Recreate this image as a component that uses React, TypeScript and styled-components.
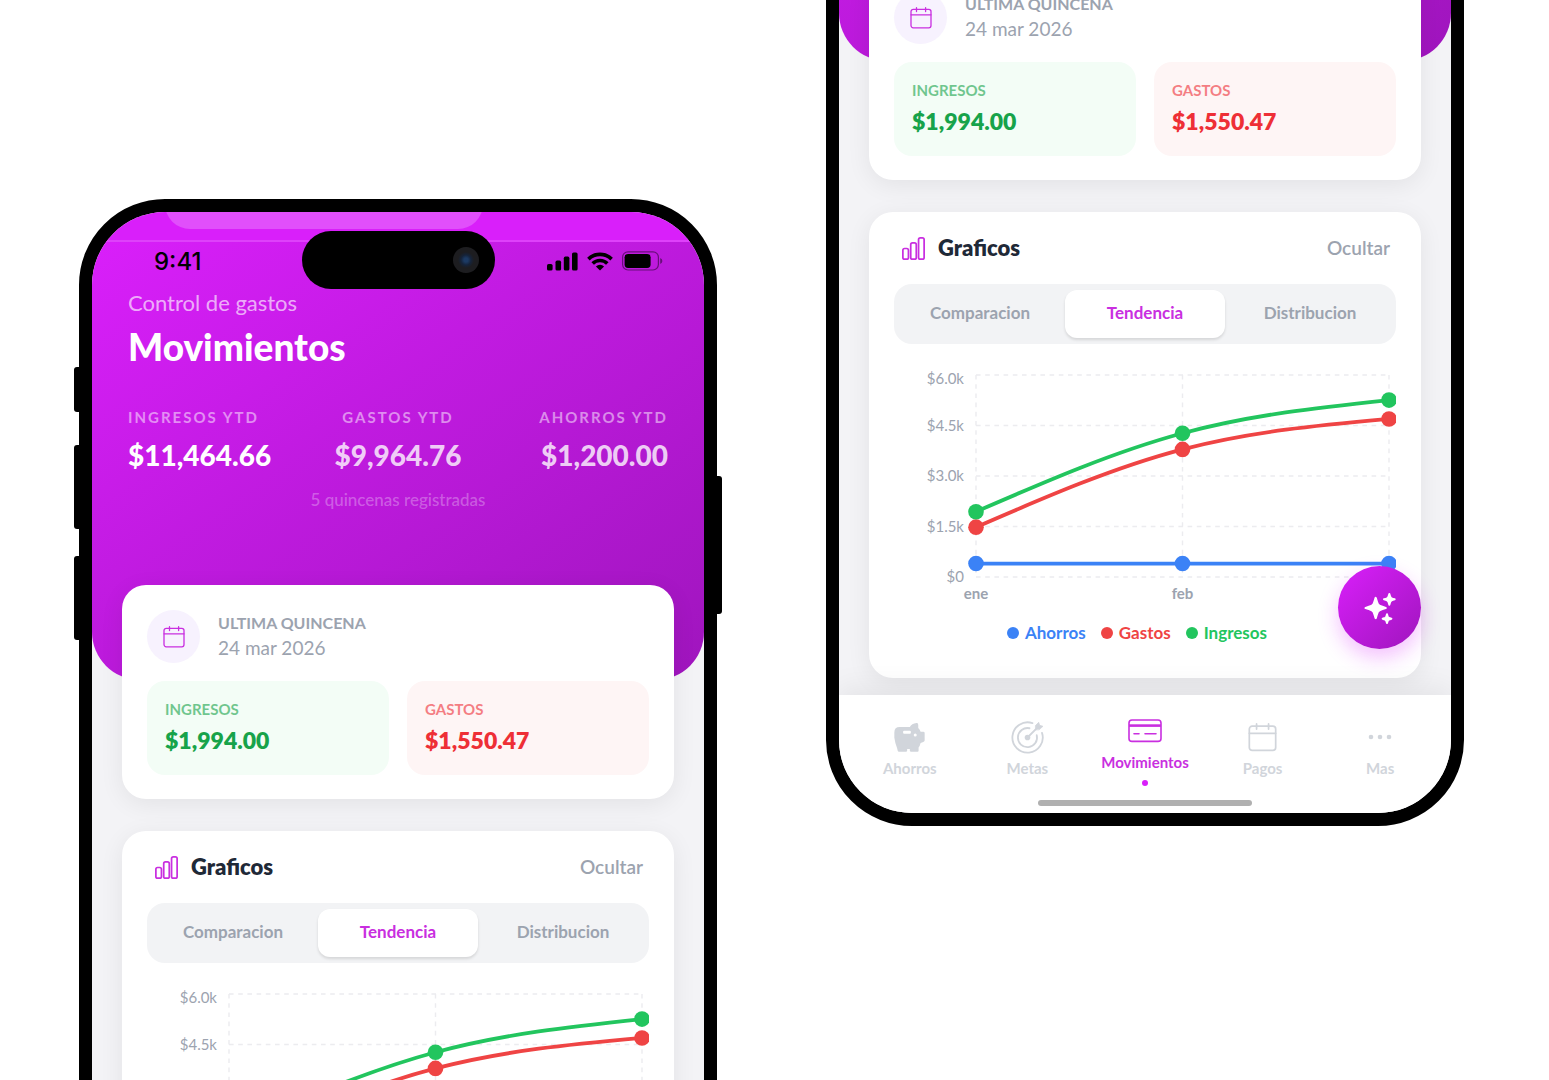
import React from "react";
import styled, { createGlobalStyle, css } from "styled-components";

const color = {
  brand: "#c92fe0",
  brandBright: "#d91ffa",
  brandDeep: "#9f15bd",
  ink: "#1f2937",
  muted: "#9ca3af",
  faint: "#d1d5db",
  page: "#f3f3f6",
  green: "#22c55e",
  red: "#ef4444",
  blue: "#3b82f6",
};

const GlobalStyle = createGlobalStyle`
  *, *::before, *::after { box-sizing: border-box; }
  body {
    margin: 0;
    background: #ffffff;
    font-family: Lato, "Open Sans", sans-serif;
  }
  button { font: inherit; border: 0; margin: 0; padding: 0; background: none; cursor: pointer; }
  h1, h2, p, dl, dd, dt { margin: 0; }
`;

/* ---------- stage and device ---------- */

const Stage = styled.main`
  display: grid;
  grid-template-columns: 1fr 1fr;
  grid-template-rows: minmax(0, 1fr);
  column-gap: 109px;
  height: 100vh;
  padding: 0 85px 0 79px;
  overflow: hidden;
`;

const Device = styled.section<{ $anchor: "top" | "bottom" }>`
  position: relative;
  min-width: 0;
  height: 1246px;
  border: 13px solid #000;
  border-radius: 86px;
  background: #000;
  ${(p) =>
    p.$anchor === "top"
      ? css`
          align-self: start;
          margin-top: 199px;
        `
      : css`
          align-self: end;
          margin-bottom: 254px;
        `}
`;

const SideKey = styled.span<{ $side: "left" | "right"; $top: number; $length: number }>`
  position: absolute;
  ${(p) => p.$side}: -18px;
  top: ${(p) => p.$top}px;
  width: 8px;
  height: ${(p) => p.$length}px;
  border-radius: 3px;
  background: #000;
`;

const Screen = styled.div`
  position: relative;
  display: flex;
  flex-direction: column;
  height: 100%;
  border-radius: 73px;
  background: ${color.page};
  overflow: hidden;
`;

const Island = styled.div`
  position: absolute;
  top: 19px;
  left: 50%;
  display: flex;
  align-items: center;
  justify-content: flex-end;
  width: 193px;
  height: 58px;
  margin-left: -96px;
  padding-right: 16px;
  border-radius: 29px;
  background: #000;
`;

const Camera = styled.div`
  width: 26px;
  height: 26px;
  border-radius: 50%;
  background: radial-gradient(circle, #1c3a63 0 2px, #15233a 5px, #1d1d20 8px);
`;

const StatusBar = styled.div`
  position: absolute;
  top: 34px;
  left: 0;
  right: 0;
  display: flex;
  align-items: center;
  justify-content: space-between;
  height: 30px;
  padding: 0 41px 0 62px;
`;

const Clock = styled.time`
  padding-top: 2px;
  font: 500 24px/28px Inter, sans-serif;
  color: #000;
`;

const StatusIcons = styled.div`
  display: flex;
  align-items: center;
  gap: 9px;
`;

const HomeIndicator = styled.div`
  position: absolute;
  bottom: 7px;
  left: 50%;
  width: 214px;
  height: 6px;
  margin-left: -107px;
  border-radius: 3px;
  background: #b0b0b0;
`;

/* ---------- scrolling content ---------- */

const Content = styled.div`
  flex: 1;
  min-height: 0;
  overflow: hidden;
`;

const Overscroll = styled.div`
  height: 30px;
  border-bottom: 2px solid #de41fa;
  background: ${color.brandBright};
  overflow: hidden;
`;

const OverscrollPill = styled.div`
  width: 52%;
  height: 50px;
  margin: -33px 0 0 73px;
  border-radius: 30px;
  background: #e14ffb;
`;

const Hero = styled.header`
  padding: 47px 36px 168px;
  border-radius: 0 0 48px 48px;
  background: linear-gradient(145deg, ${color.brandBright}, ${color.brandDeep});
  color: #fff;
`;

const Eyebrow = styled.p`
  font-size: 22px;
  line-height: 28px;
  color: rgba(255, 255, 255, 0.65);
`;

const Title = styled.h1`
  margin-top: 8px;
  font-size: 37px;
  font-weight: 900;
  line-height: 44px;
`;

const Totals = styled.dl`
  display: grid;
  grid-template-columns: repeat(3, 1fr);
  margin-top: 38px;
`;

const Total = styled.div<{ $align: "left" | "center" | "right" }>`
  text-align: ${(p) => p.$align};
`;

const TotalLabel = styled.dt`
  font-size: 15px;
  font-weight: 700;
  line-height: 20px;
  letter-spacing: 2px;
  color: rgba(255, 255, 255, 0.5);
`;

const TotalValue = styled.dd<{ $strong: boolean }>`
  margin-top: 10px;
  font-size: 28px;
  font-weight: 900;
  line-height: 36px;
  color: ${(p) => (p.$strong ? "#fff" : "rgba(255, 255, 255, 0.8)")};
`;

const HeroNote = styled.p`
  margin-top: 15px;
  font-size: 17px;
  font-weight: 500;
  line-height: 24px;
  text-align: center;
  color: rgba(255, 255, 255, 0.3);
`;

const Cards = styled.div`
  display: flex;
  flex-direction: column;
  gap: 32px;
  margin-top: -95px;
  padding: 0 30px;
`;

const Card = styled.section`
  position: relative;
  padding: 24px 25px;
  border-radius: 24px;
  background: #fff;
  box-shadow: 0 5px 24px rgba(0, 0, 0, 0.07);
`;

const PeriodRow = styled.div`
  display: flex;
  align-items: center;
  gap: 18px;
  padding-top: 1px;
`;

const PeriodIcon = styled.div`
  display: flex;
  align-items: center;
  justify-content: center;
  width: 53px;
  height: 53px;
  border-radius: 50%;
  background: #f7f2fe;
  color: ${color.brand};
`;

const PeriodCopy = styled.div`
  padding-bottom: 3px;
`;

const PeriodText = styled.p<{ $label?: boolean }>`
  font-size: ${(p) => (p.$label ? 16 : 19)}px;
  font-weight: ${(p) => (p.$label ? 700 : 400)};
  line-height: 25px;
  color: ${color.muted};
`;

const Tiles = styled.dl`
  display: grid;
  grid-template-columns: 1fr 1fr;
  gap: 18px;
  margin-top: 18px;
`;

const Tile = styled.div<{ $tone: "green" | "red" }>`
  padding: 18px 18px 20px;
  border-radius: 18px;
  background: ${(p) => (p.$tone === "green" ? "#f3fdf6" : "#fef5f5")};
  color: ${(p) => (p.$tone === "green" ? "#17a34a" : "#ee2f36")};
`;

const TileLabel = styled.dt`
  font-size: 15px;
  font-weight: 700;
  line-height: 20px;
  opacity: 0.6;
`;

const TileValue = styled.dd`
  margin-top: 6px;
  font-size: 23px;
  font-weight: 800;
  line-height: 30px;
`;

const ChartHead = styled.div`
  display: flex;
  align-items: center;
  gap: 13px;
  height: 24px;
  padding: 0 6px 0 8px;
`;

const ChartTitle = styled.h2`
  flex: 1;
  font-size: 22px;
  font-weight: 800;
  line-height: 24px;
  color: ${color.ink};
`;

const HideButton = styled.button`
  font-size: 19px;
  font-weight: 600;
  line-height: 24px;
  color: ${color.muted};
`;

const Tabs = styled.div`
  display: grid;
  grid-template-columns: repeat(3, 1fr);
  gap: 5px;
  margin-top: 24px;
  padding: 6px;
  border-radius: 18px;
  background: #f2f3f5;
`;

const Tab = styled.button<{ $active: boolean }>`
  height: 48px;
  padding-bottom: 3px;
  border-radius: 12px;
  font-size: 17px;
  font-weight: 700;
  color: ${color.muted};
  ${(p) =>
    p.$active &&
    css`
      background: #fff;
      color: ${color.brand};
      box-shadow: 0 2px 3px rgba(0, 0, 0, 0.12);
    `}
`;

const Chart = styled.svg`
  display: block;
  width: 100%;
  margin-top: 16px;
  font-family: inherit;
`;

const AxisText = styled.text<{ $bold?: boolean }>`
  font-size: 15px;
  font-weight: ${(p) => (p.$bold ? 700 : 400)};
  fill: ${color.muted};
`;

const Legend = styled.ul`
  display: flex;
  justify-content: center;
  gap: 15px;
  margin: 17px 0 0;
  padding: 0 16px 8px 0;
  list-style: none;
`;

const LegendItem = styled.li<{ $color: string }>`
  display: flex;
  align-items: center;
  gap: 6px;
  font-size: 17px;
  font-weight: 700;
  line-height: 26px;
  color: ${(p) => p.$color};

  &::before {
    content: "";
    width: 12px;
    height: 12px;
    border-radius: 50%;
    background: currentColor;
  }
`;

/* ---------- floating action and tab bar ---------- */

const AssistantButton = styled.button`
  position: absolute;
  right: 30px;
  bottom: 164px;
  display: flex;
  align-items: center;
  justify-content: center;
  width: 83px;
  height: 83px;
  border-radius: 50%;
  background: linear-gradient(135deg, ${color.brandBright}, ${color.brandDeep});
  box-shadow: 0 9px 20px rgba(217, 31, 250, 0.28);
  color: #fff;
`;

const NavBar = styled.nav`
  position: relative;
  display: grid;
  grid-template-columns: repeat(5, 1fr);
  height: 118px;
  padding: 21px 12px 0;
  background: #fff;
  box-shadow: 0 -6px 28px rgba(0, 0, 0, 0.07);
`;

const NavItem = styled.a<{ $active: boolean }>`
  display: flex;
  flex-direction: column;
  align-items: center;
  gap: 6px;
  font-size: 15px;
  font-weight: 700;
  line-height: 20px;
  text-decoration: none;
  color: ${(p) => (p.$active ? color.brand : color.faint)};
  padding-top: ${(p) => (p.$active ? 0 : 6)}px;
`;

const NavGlyph = styled.span`
  display: flex;
  align-items: center;
  justify-content: center;
  height: 30px;
`;

const NavDot = styled.span`
  width: 6px;
  height: 6px;
  margin-top: 2px;
  border-radius: 50%;
  background: ${color.brandBright};
`;

/* ---------- icons ---------- */

const CalendarIcon = ({ size }: { size: number }) => (
  <svg width={size} height={size} viewBox="0 0 22 22" fill="none" stroke="currentColor" strokeWidth="1.3" strokeLinecap="round">
    <rect x="1" y="2.4" width="20" height="18.4" rx="2.2" />
    <path d="M1 7.8H21M6.5 .7V4.6M15.6 .7V4.6" />
  </svg>
);

const BarsIcon = () => (
  <svg width="23" height="23" viewBox="0 0 66 66" fill="none" stroke={color.brand} strokeWidth="5">
    <rect x="2.5" y="33" width="16" height="30.5" rx="5" />
    <rect x="25" y="17" width="16" height="46.5" rx="5" />
    <rect x="47.5" y="2.5" width="16" height="61" rx="5" />
  </svg>
);

const PiggyIcon = () => (
  <svg width="33" height="33" viewBox="0 0 98 98" fill="currentColor">
    <path
      fillRule="evenodd"
      d="M4 34Q4 18 20 18H50Q55 8 70 6Q75 5 75 12V21Q80 26 82 32H90Q94 32 94 36V58Q94 61 90 62L82 65Q80 73 76 79V88Q76 91 73 91H54Q50 91 50 88V83H42V88Q42 91 38 91H18Q14 91 14 88L12 80Q6 65 4 50ZM33 29Q30 29 30 32V35Q30 38 33 38H50Q53 38 53 35V32Q53 29 50 29ZM66 37A4.5 4.5 0 1 0 66 46A4.5 4.5 0 1 0 66 37Z"
    />
  </svg>
);

const TargetIcon = () => (
  <svg width="33" height="33" viewBox="0 0 100 100" fill="none" stroke="currentColor" strokeWidth="5.5" strokeLinecap="round">
    <path d="M65 6.5A46 46 0 1 0 94 36" />
    <path d="M56 22A29 29 0 1 0 78 43" />
    <path d="M50 50L80 20" />
    <circle cx="50" cy="50" r="8.5" fill="currentColor" stroke="none" />
    <path d="M74 26V14L84 4L87 13L97 16L86 26Z" fill="currentColor" stroke="currentColor" strokeWidth="2" strokeLinejoin="round" />
  </svg>
);

const CreditCardIcon = () => (
  <svg width="34" height="24" viewBox="0 0 34 24" fill="none" stroke="currentColor" strokeWidth="1.6" strokeLinecap="round">
    <rect x="1" y="1" width="32" height="21.4" rx="3" />
    <path d="M1 6.6H33" strokeWidth="2.6" strokeLinecap="butt" />
    <path d="M6 14.8H11M17 14.8H28" />
  </svg>
);

const DotsIcon = () => (
  <svg width="24" height="6" viewBox="0 0 24 6" fill="currentColor">
    <circle cx="3" cy="3" r="2.3" />
    <circle cx="12" cy="3" r="2.3" />
    <circle cx="21" cy="3" r="2.3" />
  </svg>
);

const star = (cx: number, cy: number, r: number) => {
  const a = r * 0.22;
  const b = r * 0.3;
  return `M${cx} ${cy - r}Q${cx + a} ${cy - a} ${cx + b} ${cy - b}Q${cx + a} ${cy - a} ${cx + r} ${cy}Q${cx + a} ${cy + a} ${cx + b} ${cy + b}Q${cx + a} ${cy + a} ${cx} ${cy + r}Q${cx - a} ${cy + a} ${cx - b} ${cy + b}Q${cx - a} ${cy + a} ${cx - r} ${cy}Q${cx - a} ${cy - a} ${cx - b} ${cy - b}Q${cx - a} ${cy - a} ${cx} ${cy - r}Z`;
};

const SparklesIcon = () => (
  <svg width="32" height="32" viewBox="0 0 96 96" fill="currentColor" stroke="currentColor" strokeWidth="7" strokeLinejoin="round">
    <path d={star(35, 48, 30)} />
    <path d={star(76, 22, 16)} strokeWidth="6" />
    <path d={star(69, 80, 13)} strokeWidth="6" />
  </svg>
);

const SignalIcon = () => (
  <svg width="31" height="19" viewBox="0 0 31 19">
    <rect x="0" y="12" width="5.6" height="6.5" rx="1.6" />
    <rect x="8.5" y="8.6" width="5.6" height="9.9" rx="1.6" />
    <rect x="16.8" y="4.6" width="5.6" height="13.9" rx="1.6" />
    <rect x="25" y="0.4" width="5.6" height="18.1" rx="1.6" />
  </svg>
);

const WifiIcon = () => (
  <svg width="26" height="19" viewBox="0 0 26 19" fill="none" stroke="#000" strokeWidth="3.6">
    <path d="M1.4 7.1A16.6 16.6 0 0 1 24.6 7.1" />
    <path d="M5.7 11.5A10.4 10.4 0 0 1 20.3 11.5" />
    <path d="M13 18.6L8.9 14.4A6 6 0 0 1 17.1 14.4Z" fill="#000" stroke="none" />
  </svg>
);

const BatteryIcon = () => (
  <svg width="41" height="20" viewBox="0 0 41 20">
    <rect x="0.6" y="0.8" width="35.8" height="18.2" rx="5.4" fill="none" stroke="#000" strokeOpacity="0.45" strokeWidth="1.2" />
    <rect x="2.6" y="2.9" width="26" height="14" rx="3.4" />
    <path d="M38.2 7V13Q40.4 12 40.4 10T38.2 7Z" fillOpacity="0.45" />
  </svg>
);

/* ---------- chart ---------- */

const plot = { left: 82, right: 495, top: 15, bottom: 217, max: 6000 };
const months = ["ene", "feb", "mar"];
const series = [
  { name: "Ahorros", color: color.blue, values: [400, 400, 400] },
  { name: "Gastos", color: color.red, values: [1480, 3790, 4694.76] },
  { name: "Ingresos", color: color.green, values: [1940, 4270, 5254.66] },
];
const ticks = [
  { value: 6000, label: "$6.0k" },
  { value: 4500, label: "$4.5k" },
  { value: 3000, label: "$3.0k" },
  { value: 1500, label: "$1.5k" },
  { value: 0, label: "$0" },
];

const px = (i: number) => plot.left + (i * (plot.right - plot.left)) / (months.length - 1);
const py = (v: number) => plot.bottom - (v / plot.max) * (plot.bottom - plot.top);

/* Smooth three-point curve whose slope at the middle is the mean of both sides. */
const curve = (values: number[]) => {
  const [a, b, c] = values.map(py);
  const first = b - a;
  const second = c - b;
  const mid = (first + second) / 2;
  const start = (3 * first - mid) / 2;
  const end = (3 * second - mid) / 2;
  const third = (px(1) - px(0)) / 3;
  return [
    `M${px(0)} ${a}`,
    `C${px(0) + third} ${a + start / 3} ${px(1) - third} ${b - mid / 3} ${px(1)} ${b}`,
    `C${px(1) + third} ${b + mid / 3} ${px(2) - third} ${c - end / 3} ${px(2)} ${c}`,
  ].join("");
};

const TrendChart = () => (
  <Chart viewBox="0 0 502 243" role="img" aria-label="Tendencia">
    <g stroke="#ececef" strokeWidth="1.4" strokeDasharray="4.6 4.6">
      {ticks.map((t) => (
        <path key={t.value} d={`M${plot.left} ${py(t.value)}H${plot.right}`} />
      ))}
      {months.map((m, i) => (
        <path key={m} d={`M${px(i)} ${plot.top}V${plot.bottom}`} />
      ))}
    </g>
    {ticks.map((t, i) => (
      <AxisText key={t.value} x="70" y={py(t.value) + (i === 0 ? 9 : 5)} textAnchor="end">
        {t.label}
      </AxisText>
    ))}
    {months.map((m, i) => (
      <AxisText key={m} $bold x={px(i)} y="239" textAnchor="middle">
        {m}
      </AxisText>
    ))}
    {series.map((s) => (
      <g key={s.name} fill={s.color}>
        <path d={curve(s.values)} fill="none" stroke={s.color} strokeWidth="3.8" />
        {s.values.map((v, i) => (
          <circle key={i} cx={px(i)} cy={py(v)} r="7.8" />
        ))}
      </g>
    ))}
  </Chart>
);

/* ---------- app ---------- */

const totals = [
  { label: "INGRESOS YTD", value: "$11,464.66", align: "left" as const },
  { label: "GASTOS YTD", value: "$9,964.76", align: "center" as const },
  { label: "AHORROS YTD", value: "$1,200.00", align: "right" as const },
];

const tabs = ["Comparacion", "Tendencia", "Distribucion"];

const navItems = [
  { label: "Ahorros", icon: <PiggyIcon /> },
  { label: "Metas", icon: <TargetIcon /> },
  { label: "Movimientos", icon: <CreditCardIcon />, active: true },
  { label: "Pagos", icon: <CalendarIcon size={29} /> },
  { label: "Mas", icon: <DotsIcon /> },
];

/* The top-anchored phone shows the status area and keys, the bottom-anchored one the tab bar. */
const Phone = ({ anchor }: { anchor: "top" | "bottom" }) => (
  <Device $anchor={anchor}>
    {anchor === "top" && (
      <>
        <SideKey $side="left" $top={155} $length={45} />
        <SideKey $side="left" $top={233} $length={84} />
        <SideKey $side="left" $top={344} $length={84} />
        <SideKey $side="right" $top={264} $length={138} />
      </>
    )}
    <Screen>
      <Content>
        <Overscroll>
          <OverscrollPill />
        </Overscroll>
        <Hero>
          <Eyebrow>Control de gastos</Eyebrow>
          <Title>Movimientos</Title>
          <Totals>
            {totals.map((t, i) => (
              <Total key={t.label} $align={t.align}>
                <TotalLabel>{t.label}</TotalLabel>
                <TotalValue $strong={i === 0}>{t.value}</TotalValue>
              </Total>
            ))}
          </Totals>
          <HeroNote>5 quincenas registradas</HeroNote>
        </Hero>
        <Cards>
          <Card>
            <PeriodRow>
              <PeriodIcon>
                <CalendarIcon size={22} />
              </PeriodIcon>
              <PeriodCopy>
                <PeriodText $label>ULTIMA QUINCENA</PeriodText>
                <PeriodText>24 mar 2026</PeriodText>
              </PeriodCopy>
            </PeriodRow>
            <Tiles>
              <Tile $tone="green">
                <TileLabel>INGRESOS</TileLabel>
                <TileValue>$1,994.00</TileValue>
              </Tile>
              <Tile $tone="red">
                <TileLabel>GASTOS</TileLabel>
                <TileValue>$1,550.47</TileValue>
              </Tile>
            </Tiles>
          </Card>
          <Card>
            <ChartHead>
              <BarsIcon />
              <ChartTitle>Graficos</ChartTitle>
              <HideButton type="button">Ocultar</HideButton>
            </ChartHead>
            <Tabs role="tablist">
              {tabs.map((t) => (
                <Tab key={t} type="button" role="tab" aria-selected={t === "Tendencia"} $active={t === "Tendencia"}>
                  {t}
                </Tab>
              ))}
            </Tabs>
            <TrendChart />
            <Legend>
              {series.map((s) => (
                <LegendItem key={s.name} $color={s.color}>
                  {s.name}
                </LegendItem>
              ))}
            </Legend>
          </Card>
        </Cards>
      </Content>
      {anchor === "bottom" && (
        <>
          <NavBar>
            {navItems.map((n) => (
              <NavItem key={n.label} href="#" $active={!!n.active}>
                <NavGlyph>{n.icon}</NavGlyph>
                {n.label}
                {n.active && <NavDot />}
              </NavItem>
            ))}
          </NavBar>
          <AssistantButton type="button" aria-label="Asistente">
            <SparklesIcon />
          </AssistantButton>
          <HomeIndicator />
        </>
      )}
      {anchor === "top" && (
        <>
          <StatusBar>
            <Clock>9:41</Clock>
            <StatusIcons>
              <SignalIcon />
              <WifiIcon />
              <BatteryIcon />
            </StatusIcons>
          </StatusBar>
          <Island>
            <Camera />
          </Island>
        </>
      )}
    </Screen>
  </Device>
);

export default function App() {
  return (
    <>
      <GlobalStyle />
      <Stage>
        <Phone anchor="top" />
        <Phone anchor="bottom" />
      </Stage>
    </>
  );
}
